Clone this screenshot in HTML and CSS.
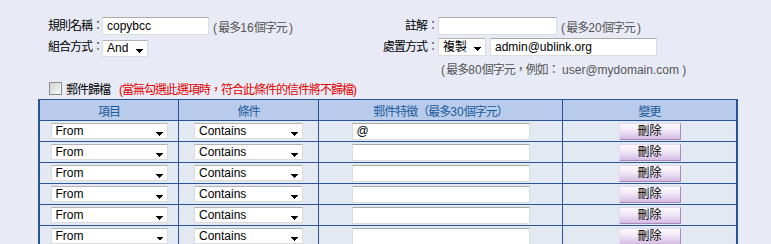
FILE: index.html
```html
<!DOCTYPE html>
<html lang="zh-Hant">

<head>
    <meta charset="utf-8">
    <meta name="viewport" content="width=device-width, initial-scale=1.0">
    <title>郵件規則</title>
    <link rel="stylesheet" href="styles.css">
</head>

<body>
    <section class="regel">
        <label class="etiket">規則名稱<span class="kolon">：</span></label>
        <div class="felt">
            <input type="text" class="navn" value="copybcc">
            <span class="hint zh">(&nbsp;最多<span class="tal">16</span>個字元&nbsp;)</span>
        </div>
        <label class="etiket">註解<span class="kolon lilla">：</span></label>
        <div class="felt">
            <input type="text" class="note" value="">
            <span class="hint zh">(&nbsp;最多<span class="tal">20</span>個字元&nbsp;)</span>
        </div>

        <label class="etiket">組合方式<span class="kolon">：</span></label>
        <div class="felt">
            <select class="kombi"><option>And</option><option>Or</option></select>
        </div>
        <label class="etiket">處置方式<span class="kolon lilla">：</span></label>
        <div class="felt">
            <select class="handling"><option>複製</option><option>轉寄</option></select>
            <input type="text" class="adresse" value="admin@ublink.org">
        </div>

        <span></span>
        <span></span>
        <span></span>
        <div class="felt eksempel">
            <span class="hint"><span class="zh">(&nbsp;最多<span class="tal">80</span>個字元，例如：</span> user@mydomain.com )</span>
        </div>
    </section>

    <div class="arkiv">
        <input type="checkbox" class="boks">
        <span class="zh">郵件歸檔</span>
        <span class="advarsel zh">(當無勾選此選項時，符合此條件的信件將不歸檔)</span>
    </div>

    <table class="liste">
        <thead>
            <tr>
                <th class="k1">項目</th>
                <th class="k2">條件</th>
                <th class="k3">郵件特徵（最多<span class="tal">30</span>個字元）</th>
                <th class="k4">變更</th>
            </tr>
        </thead>
        <tbody>
            <tr>
                <td><select class="emne"><option>From</option><option>To</option><option>Subject</option></select></td>
                <td><select class="betingelse"><option>Contains</option><option>Is</option></select></td>
                <td><input type="text" class="vaerdi" value="@"></td>
                <td><button class="slet">刪除</button></td>
            </tr>
            <tr>
                <td><select class="emne"><option>From</option><option>To</option><option>Subject</option></select></td>
                <td><select class="betingelse"><option>Contains</option><option>Is</option></select></td>
                <td><input type="text" class="vaerdi" value=""></td>
                <td><button class="slet">刪除</button></td>
            </tr>
            <tr>
                <td><select class="emne"><option>From</option><option>To</option><option>Subject</option></select></td>
                <td><select class="betingelse"><option>Contains</option><option>Is</option></select></td>
                <td><input type="text" class="vaerdi" value=""></td>
                <td><button class="slet">刪除</button></td>
            </tr>
            <tr>
                <td><select class="emne"><option>From</option><option>To</option><option>Subject</option></select></td>
                <td><select class="betingelse"><option>Contains</option><option>Is</option></select></td>
                <td><input type="text" class="vaerdi" value=""></td>
                <td><button class="slet">刪除</button></td>
            </tr>
            <tr>
                <td><select class="emne"><option>From</option><option>To</option><option>Subject</option></select></td>
                <td><select class="betingelse"><option>Contains</option><option>Is</option></select></td>
                <td><input type="text" class="vaerdi" value=""></td>
                <td><button class="slet">刪除</button></td>
            </tr>
            <tr>
                <td><select class="emne"><option>From</option><option>To</option><option>Subject</option></select></td>
                <td><select class="betingelse"><option>Contains</option><option>Is</option></select></td>
                <td><input type="text" class="vaerdi" value=""></td>
                <td><button class="slet">刪除</button></td>
            </tr>
        </tbody>
    </table>
</body>

</html>
```

FILE: styles.css
```css
body {
    margin: 0;
    background-color: #e8ebf5;
    font-family: "Liberation Sans", "Noto Sans CJK TC", sans-serif;
    font-size: 12px;
    color: #000;
}

/* kinesiske tegn står tættere i originalen */
.zh {
    letter-spacing: -1px;
}

.tal {
    letter-spacing: 0;
}

/* øverste del med navn, note osv. */
.regel {
    display: grid;
    grid-template-columns: 54px 281px 55px auto;
    row-gap: 3px;
    align-items: center;
    padding: 17px 0 0 48px;
}

.etiket {
    white-space: nowrap;
    line-height: 18px;
    text-align: right;
    letter-spacing: -1px;
}

.kolon {
    color: #444;
}

.lilla {
    color: #6a3c7a;
}

.felt {
    display: flex;
    align-items: center;
    gap: 4px;
    height: 18px;
}

.eksempel {
    padding-left: 3px;
    margin-top: 0;
}

.hint {
    color: #555;
    white-space: nowrap;
}

input[type="text"] {
    box-sizing: border-box;
    height: 18px;
    margin: 0;
    padding: 0 4px;
    border: 1px solid #dcdcdc;
    border-top-color: #a9a9a9;
    background: #fff;
    font-family: "Liberation Sans", "Noto Sans CJK TC", sans-serif;
    font-size: 12px;
    color: #000;
}

.navn {
    width: 107px;
}

.note {
    width: 119px;
}

.adresse {
    width: 167px;
}

select {
    appearance: none;
    -webkit-appearance: none;
    box-sizing: border-box;
    height: 17px;
    margin: 0;
    padding: 0 0 0 4px;
    border: 1px solid #dcdcdc;
    border-top-color: #b4b4b4;
    border-radius: 0;
    background-color: #fff;
    background-image: linear-gradient(45deg, transparent 50%, #000 50%), linear-gradient(135deg, #000 50%, transparent 50%);
    background-size: 4px 4px;
    background-repeat: no-repeat;
    background-origin: border-box;
    background-position: right 8px top 9px, right 4px top 9px;
    font-family: "Liberation Sans", "Noto Sans CJK TC", sans-serif;
    font-size: 12px;
    color: #000;
}

.kombi {
    width: 46px;
    margin-top: 2px;
}

.handling {
    width: 48px;
    height: 18px;
}

.arkiv {
    display: flex;
    align-items: center;
    height: 14px;
    margin: 4px 0 0 49px;
}

.boks {
    appearance: none;
    -webkit-appearance: none;
    width: 13px;
    height: 13px;
    margin: 0 4px 0 0;
    border: 1px solid #8c8c8c;
    background: linear-gradient(135deg, #d4d4d4, #f8f8f8);
}

.advarsel {
    color: #e60000;
    margin-left: 9px;
}

/* tabellen med betingelser */
.liste {
    width: 700px;
    margin: 4px 0 0 38px;
    border-collapse: collapse;
    border-left: 2px solid #2b5497;
    border-right: 2px solid #2b5497;
    table-layout: fixed;
}

.liste th,
.liste td {
    height: 20px;
    padding: 0;
    border: 1px solid #2b5497;
    text-align: center;
    vertical-align: middle;
}

.liste th {
    background-color: #b8cbea;
    color: #1c5a9c;
    font-size: 12px;
    font-weight: normal;
    letter-spacing: -1px;
}

.liste td {
    background-color: #e2e9f3;
    line-height: 0;
}

.k1 {
    width: 138px;
}

.k2 {
    width: 139px;
}

.k3 {
    width: 243px;
}

.emne {
    width: 117px;
    height: 16px;
}

.betingelse {
    width: 109px;
    height: 16px;
}

.vaerdi {
    width: 178px;
    height: 17px !important;
}

.slet {
    box-sizing: border-box;
    width: 62px;
    height: 17px;
    padding: 0;
    border: 1px solid;
    border-color: #e6d8ee #a68bb6 #a68bb6 #e6d8ee;
    background: linear-gradient(#fdfbfe, #f0e6f5 45%, #d5bbe5);
    font-family: "Liberation Sans", "Noto Sans CJK TC", sans-serif;
    font-size: 12px;
    line-height: 15px;
    color: #000;
}
```
